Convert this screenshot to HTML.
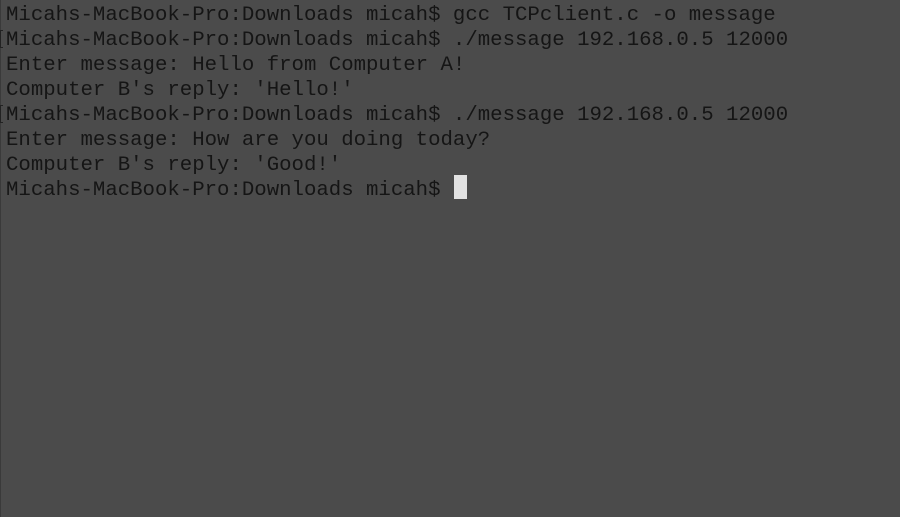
<!DOCTYPE html>
<html><head><meta charset="utf-8"><style>
html,body{margin:0;padding:0;}
body{width:900px;height:517px;background:#4b4b4b;overflow:hidden;position:relative;
font-family:"Liberation Mono",monospace;font-size:20.7px;color:#151515;}
.l{position:absolute;left:6px;height:25px;line-height:25px;white-space:pre;}
.b{position:absolute;left:0;width:3px;height:18px;border-left:1px solid #222;border-top:1px solid #222;border-bottom:1px solid #222;box-sizing:border-box;}
.cur{position:absolute;left:454px;top:175px;width:13px;height:24px;background:#e2e2e2;}
.edge{position:absolute;left:0;top:0;width:1px;height:517px;background:#3a3a3a;}
</style></head><body>
<div class="edge"></div>
<div class="l" style="top:3px">Micahs-MacBook-Pro:Downloads micah$ gcc TCPclient.c -o message</div>
<div class="b" style="top:30px"></div>
<div class="l" style="top:28px">Micahs-MacBook-Pro:Downloads micah$ ./message 192.168.0.5 12000</div>
<div class="l" style="top:53px">Enter message: Hello from Computer A!</div>
<div class="l" style="top:78px">Computer B's reply: 'Hello!'</div>
<div class="b" style="top:105px"></div>
<div class="l" style="top:103px">Micahs-MacBook-Pro:Downloads micah$ ./message 192.168.0.5 12000</div>
<div class="l" style="top:128px">Enter message: How are you doing today?</div>
<div class="l" style="top:153px">Computer B's reply: 'Good!'</div>
<div class="l" style="top:178px">Micahs-MacBook-Pro:Downloads micah$ </div>
<div class="cur"></div>
</body></html>
